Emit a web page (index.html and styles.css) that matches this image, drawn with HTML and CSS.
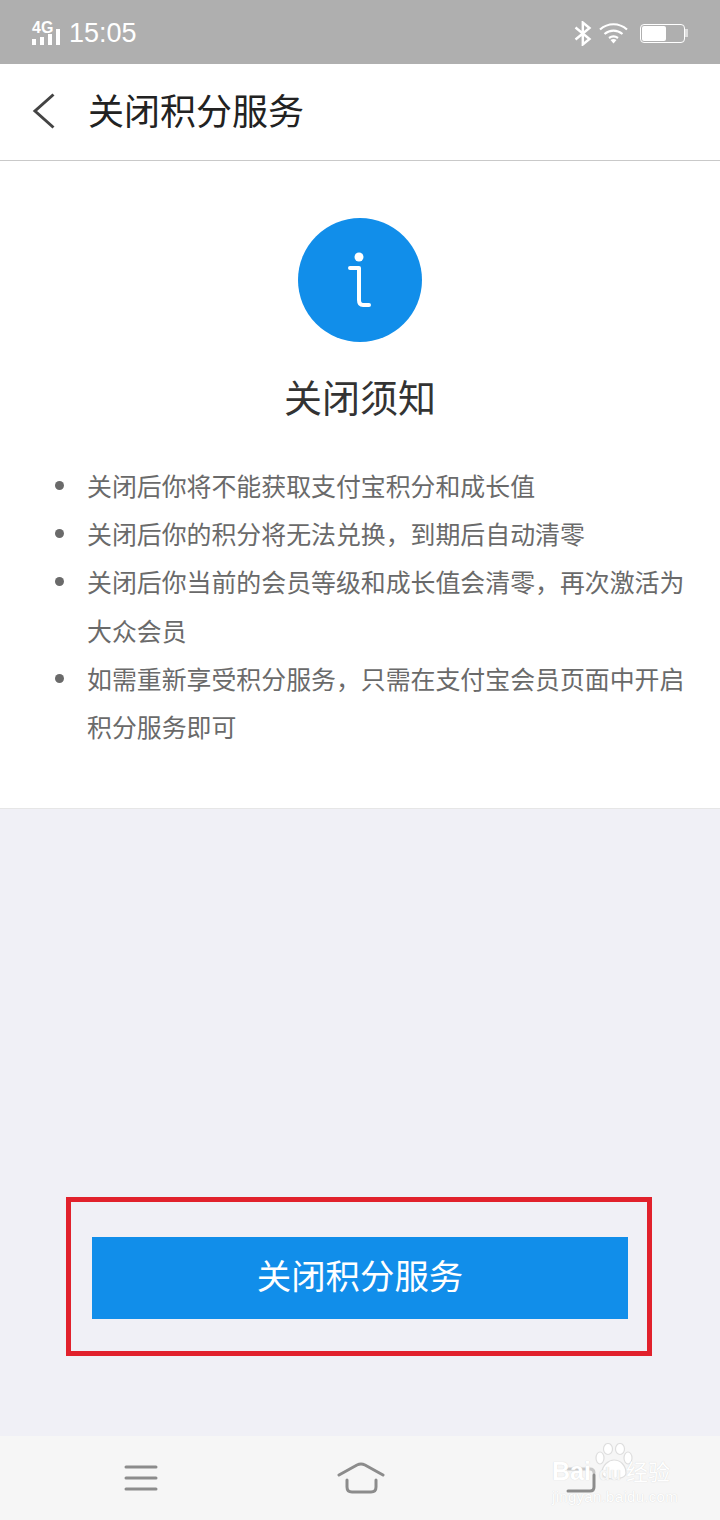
FILE: index.html
```html
<!DOCTYPE html>
<html lang="zh-CN">
<head>
  <meta charset="UTF-8">
  <meta name="viewport" content="width=device-width, initial-scale=1.0">
  <title>关闭积分服务</title>
  <link rel="stylesheet" href="styles.css">
</head>
<body>

  <!-- Status bar -->
  <div class="status-bar">
    <div class="status-left">
      <div class="signal">
        <span class="signal-label">4G</span>
        <svg class="signal-bars" width="29" height="16" viewBox="0 0 29 16">
          <rect x="0" y="10" width="4" height="6" fill="#fff"/>
          <rect x="8" y="8" width="4" height="8" fill="#fff"/>
          <rect x="16" y="5" width="4" height="11" fill="#fff"/>
          <rect x="24" y="0" width="4" height="16" fill="#fff"/>
        </svg>
      </div>
      <span class="clock">15:05</span>
    </div>
    <div class="status-right">
      <svg class="bt-icon" width="18" height="25" viewBox="0 0 18 25" fill="none" stroke="#fff" stroke-width="2.4">
        <path d="M1.5 6.5 L15.5 18 L8.8 23.5 V1.5 L15.5 7 L1.5 18.5"/>
      </svg>
      <svg width="29" height="22" viewBox="0 0 29 22" fill="none" stroke="#fff" stroke-width="2.2">
        <path d="M1 7.5 C9 0.5 20 0.5 28 7.5"/>
        <path d="M5.5 12 C11 7.5 18 7.5 23.5 12"/>
        <path d="M10 16 C12.8 14 16.2 14 19 16"/>
        <path d="M11.5 18 L14.5 21.5 L17.5 18 C15.5 16.8 13.5 16.8 11.5 18 Z" fill="#fff" stroke="none"/>
      </svg>
      <div class="battery">
        <div class="battery-body"><div class="battery-level"></div></div>
        <div class="battery-cap"></div>
      </div>
    </div>
  </div>

  <!-- Header -->
  <div class="header">
    <svg class="back-icon" width="24" height="36" viewBox="0 0 24 36" fill="none" stroke="#444" stroke-width="3">
      <path d="M21.5 1.5 L3 18 L21.5 34.5"/>
    </svg>
    <h1>关闭积分服务</h1>
  </div>

  <!-- Notice -->
  <div class="notice">
    <div class="info-circle">
      <svg width="24" height="58" viewBox="0 0 24 58" fill="none" stroke="#fff" stroke-width="4" stroke-linecap="round" stroke-linejoin="round">
        <circle cx="11" cy="6" r="4.5" fill="#fff" stroke="none"/>
        <path d="M2 17 H11 V49 Q11 54 15 54 H21"/>
      </svg>
    </div>
    <h2>关闭须知</h2>
    <ul class="notice-list">
      <li>关闭后你将不能获取支付宝积分和成长值</li>
      <li>关闭后你的积分将无法兑换，到期后自动清零</li>
      <li>关闭后你当前的会员等级和成长值会清零，再次激活为大众会员</li>
      <li>如需重新享受积分服务，只需在支付宝会员页面中开启积分服务即可</li>
    </ul>
  </div>

  <!-- Button area -->
  <div class="action-area">
    <div class="red-frame">
      <button class="close-btn">关闭积分服务</button>
    </div>
  </div>

  <!-- Nav bar -->
  <div class="nav-bar">
    <svg width="34" height="28" viewBox="0 0 34 28" fill="none" stroke="#8c8c8c" stroke-width="3" stroke-linecap="round">
      <path d="M2 3 H32"/>
      <path d="M2 14 H32"/>
      <path d="M2 25 H32"/>
    </svg>
    <svg width="48" height="32" viewBox="0 0 48 32" fill="none" stroke="#8c8c8c" stroke-width="3" stroke-linecap="round" stroke-linejoin="round">
      <path d="M2 13 L20 3 Q24 1 28 3 L46 13"/>
      <path d="M10 18 V25 Q10 30 15 30 H34 Q39 30 39 25 V18"/>
    </svg>
    <svg width="34" height="34" viewBox="0 0 34 34" fill="none" stroke-width="3" stroke-linecap="round">
      <path d="M4 8 H26 Q30 8 30 12" stroke="#c8c8c8"/>
      <path d="M4 30 H26 Q30 30 30 26 V14" stroke="#8c8c8c"/>
    </svg>

    <div class="watermark">
      <svg class="paw" width="38" height="38" viewBox="0 0 38 38" fill="#fff" stroke="#dedede" stroke-width="1.2">
        <ellipse cx="5" cy="15" rx="4" ry="6"/>
        <ellipse cx="13" cy="6" rx="4.5" ry="5.5"/>
        <ellipse cx="25" cy="6" rx="4.5" ry="5.5"/>
        <ellipse cx="33" cy="15" rx="4" ry="6"/>
        <path d="M7 30 C7 22 14 17 19 17 C25 17 31 22 31 30 C31 38 7 38 7 30 Z"/>
      </svg>
      <div class="wm-top">
        <span class="wm-bai">Bai</span>
        <span class="wm-du">du</span>
        <span class="wm-cn">经验</span>
      </div>
      <div class="wm-url">jingyan.baidu.com</div>
    </div>
  </div>

</body>
</html>
```

FILE: styles.css
```css
html, body {
  margin: 0;
  padding: 0;
}
body {
  width: 720px;
  height: 1520px;
  display: flex;
  flex-direction: column;
  font-family: "Noto Sans CJK SC", "Liberation Sans", sans-serif;
  background-color: #f0f0f6;
  overflow: hidden;
}

.status-bar {
  height: 64px;
  background-color: #afafaf;
  display: flex;
  justify-content: space-between;
  align-items: center;
  padding: 2px 32px 0;
  box-sizing: border-box;
  flex-shrink: 0;
}
.status-left {
  display: flex;
  align-items: center;
  gap: 8px;
}
.signal {
  display: flex;
  flex-direction: column;
  width: 29px;
}
.signal-label {
  font-family: "Liberation Sans", sans-serif;
  font-size: 16px;
  line-height: 13px;
  font-weight: bold;
  color: #fff;
}
.signal-bars {
  display: block;
  margin-top: -5px;
}
.clock {
  font-family: "Liberation Sans", sans-serif;
  font-size: 27px;
  color: #fff;
}
.status-right {
  display: flex;
  align-items: center;
  gap: 9px;
}
.bt-icon {
  margin-right: -2px;
}
.battery {
  display: flex;
  align-items: center;
  margin-left: 3px;
}
.battery-body {
  width: 41px;
  height: 15px;
  border: 1px solid #fff;
  border-radius: 4px;
  padding: 1px;
}
.battery-level {
  width: 24px;
  height: 100%;
  background-color: #fff;
  border-radius: 2px;
}
.battery-cap {
  width: 3px;
  height: 8px;
  background-color: #ddd;
}

.header {
  height: 97px;
  background-color: #fff;
  border-bottom: 1px solid #c9c9c9;
  box-sizing: border-box;
  display: flex;
  align-items: center;
  padding-left: 32px;
  padding-bottom: 2px;
  flex-shrink: 0;
}
.back-icon {
  flex-shrink: 0;
}
.header h1 {
  margin: 0 0 4px 32px;
  font-size: 36px;
  font-weight: 400;
  color: #222;
}

.notice {
  height: 648px;
  background-color: #fff;
  border-bottom: 1px solid #e6e6e6;
  box-sizing: border-box;
  padding-top: 57px;
  display: flex;
  flex-direction: column;
  align-items: center;
  flex-shrink: 0;
}
.info-circle {
  width: 124px;
  height: 124px;
  border-radius: 50%;
  background-color: #118eea;
  display: flex;
  align-items: center;
  justify-content: center;
}
.notice h2 {
  margin: 26px 0 0;
  font-size: 38px;
  line-height: 56px;
  font-weight: 400;
  color: #333;
}
.notice-list {
  margin: 37px 0 0;
  padding: 0 30px 0 87px;
  align-self: stretch;
  list-style: none;
  font-size: 24.9px;
  line-height: 48.2px;
  color: #6a6a6a;
}
.notice-list li {
  position: relative;
}
.notice-list li::before {
  content: "";
  position: absolute;
  left: -32px;
  top: 20px;
  width: 9px;
  height: 9px;
  border-radius: 50%;
  background-color: #6a6a6a;
}

.action-area {
  flex: 1;
  display: flex;
  flex-direction: column;
  justify-content: flex-end;
  padding: 0 68px 80px 66px;
}
.red-frame {
  border: 5px solid #e1212c;
  padding: 35px 19px 32px 21px;
}
.close-btn {
  display: block;
  width: 100%;
  height: 82px;
  border: 0;
  padding: 0 0 8px;
  background-color: #118eea;
  color: #fff;
  font-family: inherit;
  font-size: 34.4px;
}

.nav-bar {
  position: relative;
  height: 84px;
  background-color: #f6f6f6;
  display: flex;
  justify-content: space-between;
  align-items: center;
  padding: 0 122px 0 124px;
  flex-shrink: 0;
}

.watermark {
  position: absolute;
  left: 552px;
  top: 7px;
  width: 132px;
  height: 62px;
  color: #fff;
  text-shadow: 0 0 1px #cfcfcf;
}
.paw {
  position: absolute;
  left: 43px;
  top: 0;
}
.wm-top {
  position: relative;
  padding-top: 14px;
  display: flex;
  align-items: baseline;
  white-space: nowrap;
  font-family: "Liberation Sans", sans-serif;
  font-weight: bold;
}
.wm-bai {
  font-size: 25px;
  line-height: 28px;
}
.wm-du {
  margin-left: 8px;
  color: #f6f6f6;
  font-size: 18px;
}
.wm-cn {
  margin-left: 5px;
  font-family: "Noto Sans CJK SC", sans-serif;
  font-size: 22px;
  line-height: 26px;
  font-weight: 400;
}
.wm-url {
  position: relative;
  margin-top: 3px;
  font-family: "Liberation Sans", sans-serif;
  font-size: 15px;
  line-height: 18px;
  letter-spacing: 0.3px;
  white-space: nowrap;
}
```
